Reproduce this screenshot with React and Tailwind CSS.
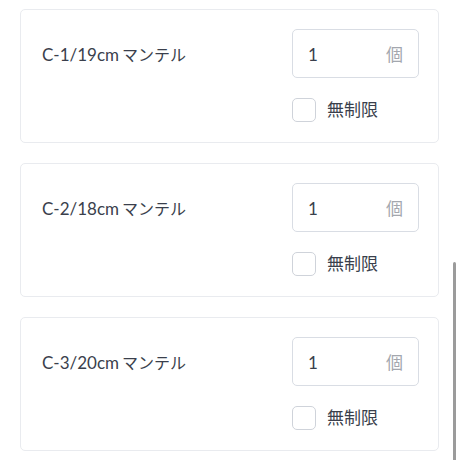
import React from 'react'

const items = [
  { code: 'C-1/19cm', name: 'マンテル' },
  { code: 'C-2/18cm', name: 'マンテル' },
  { code: 'C-3/20cm', name: 'マンテル' },
]

function ItemCard({ code, name }) {
  return (
    <div className="w-[419px] rounded-[5px] border border-[#e9ebef] bg-white pl-[21px] pr-[19px] pt-[19px] pb-[20px] flex justify-between">
      <div className="h-[49px] pt-[2px] flex items-center text-[#3a3f4c]">
        <span className="text-[17px]">{code}</span>
        <span className="text-[16px] ml-[3px]">{name}</span>
      </div>
      <div className="w-[127px] flex flex-col gap-[20px]">
        <div className="h-[49px] pt-[2px] rounded-[5px] border border-[#d9dde4] flex items-center justify-between pl-[15px] pr-[15px]">
          <span className="text-[17px] text-[#3a3f4c]">1</span>
          <span className="text-[17px] text-[#a3a7ae]">個</span>
        </div>
        <label className="h-[24px] flex items-center gap-[11px]">
          <span className="w-[24px] h-[24px] rounded-[5px] border border-[#cfd3da] bg-white" />
          <span className="text-[17px] leading-[24px] text-[#3a3f4c]">無制限</span>
        </label>
      </div>
    </div>
  )
}

export default function App() {
  return (
    <div
      className="relative w-[460px] h-[460px] overflow-hidden bg-white"
      style={{ fontFamily: 'Lato, "Noto Sans CJK JP", sans-serif' }}
    >
      <div className="pl-[20px] pt-[9px] flex flex-col gap-[20px]">
        {items.map((t) => (
          <ItemCard key={t.code} code={t.code} name={t.name} />
        ))}
      </div>
      <div className="absolute left-[453px] top-[262px] w-[3px] h-[210px] rounded-full bg-[#9b9b9b]" />
    </div>
  )
}
